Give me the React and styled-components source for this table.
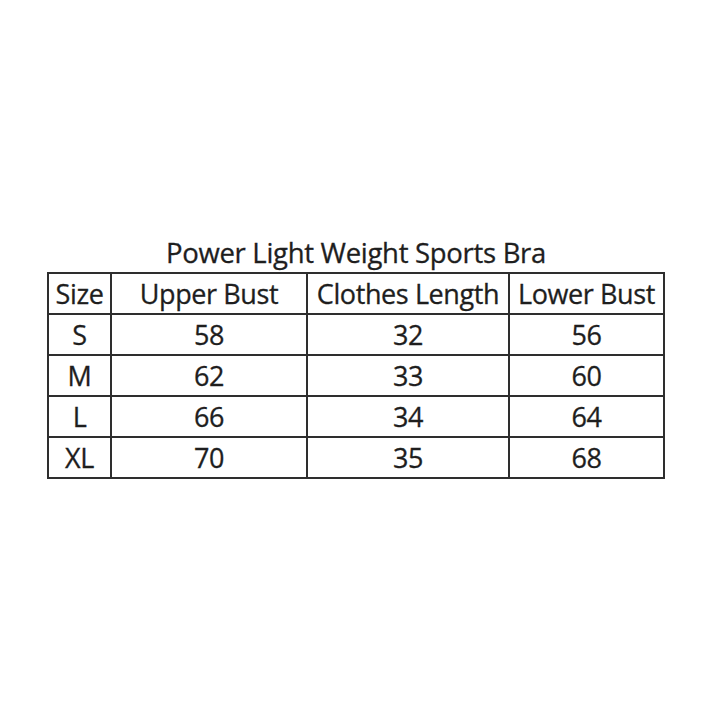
import React from "react";
import styled, { createGlobalStyle } from "styled-components";

const GlobalStyle = createGlobalStyle`
  html, body {
    margin: 0;
    padding: 0;
    background: #ffffff;
  }
  body {
    font-family: "Open Sans", "Noto Sans", sans-serif;
    color: #1e1e1e;
  }
`;

const Page = styled.div`
  width: 720px;
  height: 720px;
  display: flex;
  justify-content: flex-start;
  padding: 234px 0 0 47px;
  box-sizing: border-box;
`;

const Chart = styled.div`
  display: flex;
  flex-direction: column;
  align-items: center;
`;

const Title = styled.div`
  font-size: 27.5px;
  line-height: 38px;
  height: 38px;
  letter-spacing: -0.3px;
  -webkit-text-stroke: 0.3px #1e1e1e;
  white-space: nowrap;
`;

const Table = styled.table`
  border-collapse: collapse;
  table-layout: fixed;
  width: 618px;
`;

const Cell = styled.td`
  border: 2px solid #2e2e2e;
  height: 39px;
  padding: 0;
  text-align: center;
  font-size: 27px;
  line-height: 39px;
  letter-spacing: -0.4px;
  -webkit-text-stroke: 0.3px #1e1e1e;
  white-space: nowrap;
  overflow: visible;
`;

const widths = [63, 196, 202, 155];
const header = ["Size", "Upper Bust", "Clothes Length", "Lower Bust"];
const rows = [
  ["S", "58", "32", "56"],
  ["M", "62", "33", "60"],
  ["L", "66", "34", "64"],
  ["XL", "70", "35", "68"],
];

export default function App() {
  return (
    <>
      <GlobalStyle />
      <Page>
        <Chart>
          <Title>Power Light Weight Sports Bra</Title>
          <Table>
            <colgroup>
              {widths.map((w, i) => (
                <col key={i} style={{ width: w }} />
              ))}
            </colgroup>
            <tbody>
              <tr>
                {header.map(h => (
                  <Cell key={h}>{h}</Cell>
                ))}
              </tr>
              {rows.map(r => (
                <tr key={r[0]}>
                  {r.map((c, i) => (
                    <Cell key={i}>{c}</Cell>
                  ))}
                </tr>
              ))}
            </tbody>
          </Table>
        </Chart>
      </Page>
    </>
  );
}
